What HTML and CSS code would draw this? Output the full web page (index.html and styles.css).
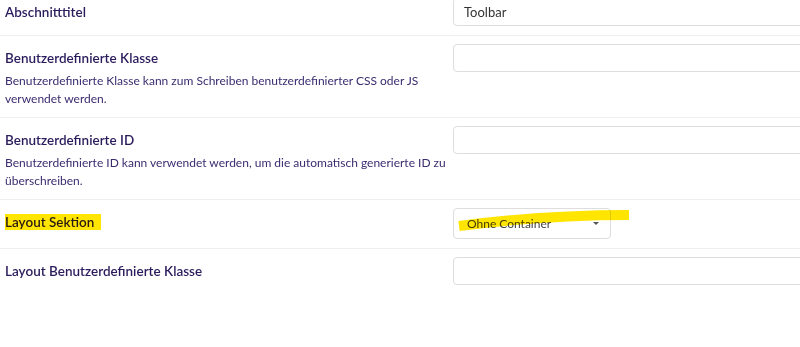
FILE: index.html
```html
<!DOCTYPE html>
<html>

<head>
    <title>Sektionseinstellungen</title>
    <link rel="stylesheet" href="styles.css">
</head>

<body>
    <div class="settings">

        <div class="row">
            <div class="label-col">
                <h3 class="field-title">Abschnitttitel</h3>
            </div>
            <div class="field-col">
                <input type="text" class="text-input" value="Toolbar">
            </div>
        </div>

        <div class="row">
            <div class="label-col">
                <h3 class="field-title">Benutzerdefinierte Klasse</h3>
                <p class="field-desc">Benutzerdefinierte Klasse kann zum Schreiben benutzerdefinierter CSS oder JS verwendet werden.</p>
            </div>
            <div class="field-col">
                <input type="text" class="text-input">
            </div>
        </div>

        <div class="row">
            <div class="label-col">
                <h3 class="field-title">Benutzerdefinierte ID</h3>
                <p class="field-desc">Benutzerdefinierte ID kann verwendet werden, um die automatisch generierte ID zu überschreiben.</p>
            </div>
            <div class="field-col">
                <input type="text" class="text-input">
            </div>
        </div>

        <div class="row">
            <div class="label-col">
                <h3 class="field-title"><mark class="marker">Layout Sektion&nbsp;&nbsp;</mark></h3>
            </div>
            <div class="field-col">
                <div class="select-wrap">
                    <div class="select-box">
                        <span>Ohne Container</span>
                        <span class="caret"></span>
                    </div>
                    <!-- marker stroke drawn over the select -->
                    <svg class="marker-stroke" width="180" height="26" viewBox="0 0 180 26">
                        <path d="M4 16 C 50 10, 110 5, 174 5" stroke="#ffe500" stroke-width="10" fill="none"/>
                    </svg>
                </div>
            </div>
        </div>

        <div class="row last">
            <div class="label-col">
                <h3 class="field-title">Layout Benutzerdefinierte Klasse</h3>
            </div>
            <div class="field-col">
                <input type="text" class="text-input">
            </div>
        </div>

    </div>
</body>

</html>
```

FILE: styles.css
```css
/* section settings panel */

body {
    font-family: Lato, "Noto Sans", sans-serif;
    background-color: #ffffff;
    margin: 0;
    padding: 0;
    overflow: hidden;
}

.settings {
    width: 1000px;
    margin-top: -10px;
}

.row {
    display: flex;
    padding: 8px 0 9px 5px;
    border-bottom: 1px solid #efefef;
}

.row.last {
    border-bottom: none;
}

.label-col {
    width: 448px;
    flex-shrink: 0;
}

.field-col {
    flex: 1;
}

.field-title {
    margin: 0;
    font-size: 13.5px;
    font-weight: 600;
    line-height: 28px;
    color: #2a1b5c;
}

.field-desc {
    margin: 0;
    width: 446px;
    font-size: 12px;
    line-height: 18px;
    color: #3b2c70;
}

.marker {
    background-color: #ffe500;
    color: #2a1b12;
    padding: 0;
}

.text-input {
    display: block;
    box-sizing: border-box;
    width: 520px;
    height: 28px;
    padding: 0 10px;
    border: 1px solid #dedede;
    border-radius: 4px;
    font-family: Lato, "Noto Sans", sans-serif;
    font-size: 13px;
    color: #333333;
    background: #ffffff;
}

.select-wrap {
    position: relative;
    width: 158px;
}

.select-box {
    box-sizing: border-box;
    height: 31px;
    display: flex;
    align-items: center;
    justify-content: space-between;
    padding: 0 13px;
    border: 1px solid #dedede;
    border-radius: 4px;
    font-size: 12px;
    color: #444444;
}

.caret {
    width: 0;
    height: 0;
    border-left: 3px solid transparent;
    border-right: 3px solid transparent;
    border-top: 3px solid #555555;
    margin-right: -2px;
}

.marker-stroke {
    position: absolute;
    left: 2px;
    top: 2px;
    mix-blend-mode: multiply;
}
```
